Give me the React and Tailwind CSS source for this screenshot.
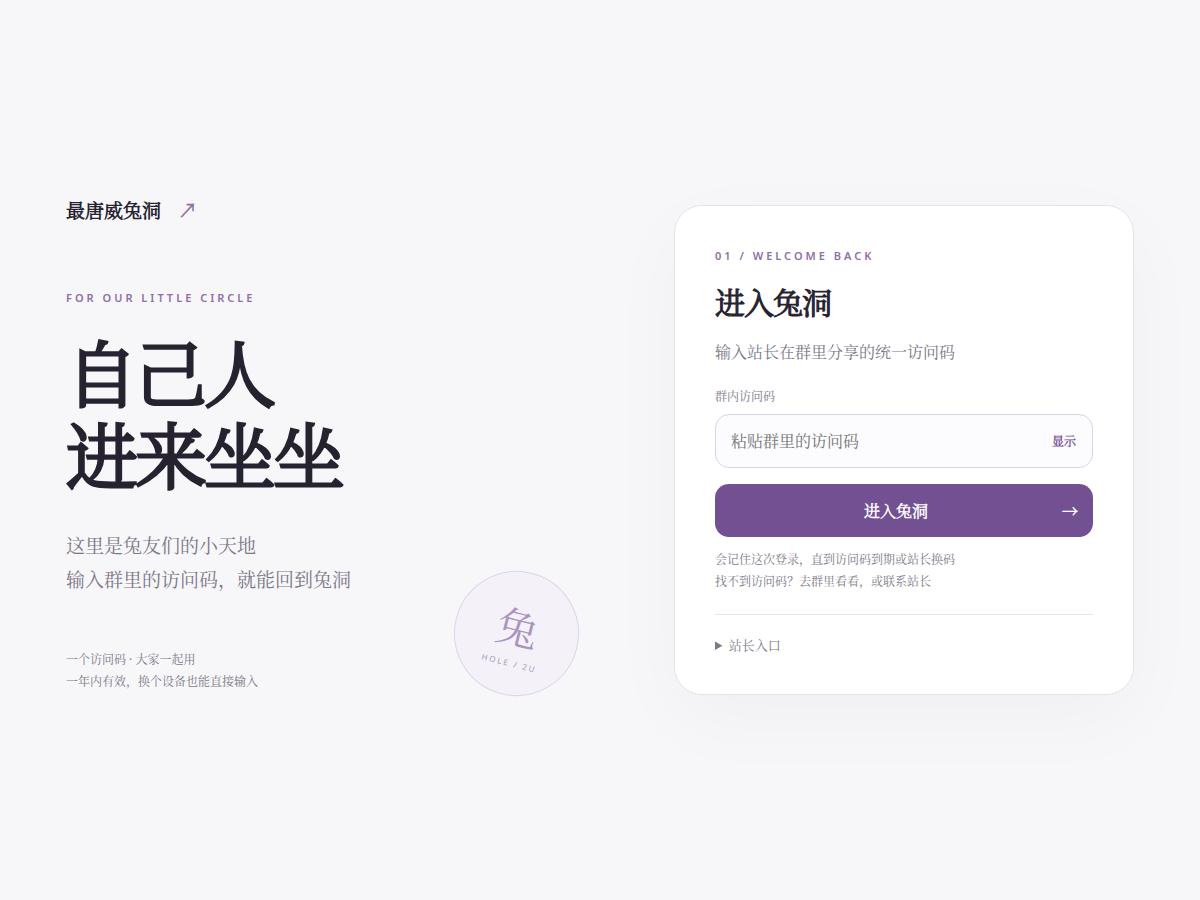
import React, { useState } from 'react';

const Eyebrow = ({ children }) => (
    <p className="text-[11px] leading-4 font-semibold tracking-[3px] text-[#8e6fa8]">{children}</p>
);

// Small bold labels: the light cut, thickened by the browser, stays open at these sizes
const Strong = ({ className = '', ...props }) => (
    <span
        className={`font-['Noto_Serif_CJK_SC_Light','Noto_Serif_CJK_SC',serif] font-bold ${className}`}
        {...props}
    />
);

const Intro = () => (
    <section className="pb-[7px]">
        <div className="flex items-center gap-[17px] text-[19px] leading-[26px]">
            <Strong>最唐威兔洞</Strong>
            <Strong className="text-[#8e6fa8]" aria-hidden="true">↗</Strong>
        </div>

        <div className="mt-[67px]">
            <Eyebrow>FOR OUR LITTLE CIRCLE</Eyebrow>
        </div>
        <h1 className="mt-[26px] text-[72px] leading-[82px] font-light tracking-[-3px] [-webkit-text-stroke:3px_currentColor]">
            自己人<br />进来坐坐
        </h1>

        <div className="mt-[33px] flex items-end justify-between">
            <div className="pb-[3px]">
                <p className="text-[19px] leading-[34px] text-[#7d7887]">
                    这里是兔友们的小天地<br />输入群里的访问码，就能回到兔洞
                </p>
                <p className="mt-[52px] text-xs leading-[22px] text-[#7d7887]">
                    一个访问码 · 大家一起用<br />一年内有效，换个设备也能直接输入
                </p>
            </div>
            <div className="flex size-[125px] shrink-0 rotate-[14deg] flex-col items-center justify-center rounded-full border border-[#ded3e7] bg-[#f4f1f8] pt-1 text-[#a995c0]">
                <span className="text-[42px] leading-[52px]">兔</span>
                <span className="mt-1 text-[8px] leading-3 tracking-[2px]">HOLE / 2U</span>
            </div>
        </div>
    </section>
);

const LoginCard = () => {
    const [code, setCode] = useState('');
    const [visible, setVisible] = useState(false);

    return (
        <section className="rounded-[28px] border border-[#e5e2ec] bg-white px-10 pt-[42px] pb-[38px] shadow-[0_24px_80px_rgba(30,30,36,0.03)]">
            <Eyebrow>01 / WELCOME BACK</Eyebrow>
            <h2 className="mt-[18px] text-[30px] leading-[42px] font-normal tracking-[-1px] [-webkit-text-stroke:1px_currentColor]">
                进入兔洞
            </h2>
            <p className="mt-[14px] text-base leading-7 text-[#7d7887]">输入站长在群里分享的统一访问码</p>

            <form onSubmit={(e) => e.preventDefault()}>
                <label htmlFor="code" className="mt-[21px] block text-xs leading-5 text-[#7d7887]">
                    群内访问码
                </label>
                <div className="mt-[7px] flex h-[54px] items-center rounded-[14px] border border-[#d9d4e3] bg-[#fcfbfe] pr-4 pl-[15px]">
                    <input
                        id="code"
                        type={visible ? 'text' : 'password'}
                        value={code}
                        onChange={(e) => setCode(e.target.value)}
                        className="min-w-0 flex-1 bg-transparent text-base outline-none placeholder:text-[#757575]"
                        placeholder="粘贴群里的访问码"
                    />
                    <button
                        type="button"
                        onClick={() => setVisible(!visible)}
                        className="text-xs text-[#725092]"
                    >
                        <Strong>{visible ? '隐藏' : '显示'}</Strong>
                    </button>
                </div>
                <button
                    type="submit"
                    className="mt-4 flex h-[53px] w-full items-center rounded-[14px] bg-[#725092] px-[15px] text-base text-white"
                >
                    <Strong className="flex-1">进入兔洞</Strong>
                    <Strong aria-hidden="true">→</Strong>
                </button>
            </form>

            <p className="mt-3 text-xs leading-[22px] text-[#7d7887]">
                会记住这次登录，直到访问码到期或站长换码<br />找不到访问码？去群里看看，或联系站长
            </p>

            <details className="mt-[21px] border-t border-[#e5e2ec] pt-[19px]">
                <summary className="cursor-pointer text-[13px] leading-[22px] text-[#7d7887]">站长入口</summary>
            </details>
        </section>
    );
};

const App = () => (
    <main
        lang="zh-CN"
        className="grid min-h-screen grid-cols-[minmax(0,1fr)_460px] items-center gap-[95px] bg-[#f7f7fa] px-[66px] font-['Noto_Sans','Noto_Serif_CJK_SC','Noto_Sans_CJK_SC',sans-serif] text-[#26222f]"
    >
        <Intro />
        <LoginCard />
    </main>
);

export default App;
